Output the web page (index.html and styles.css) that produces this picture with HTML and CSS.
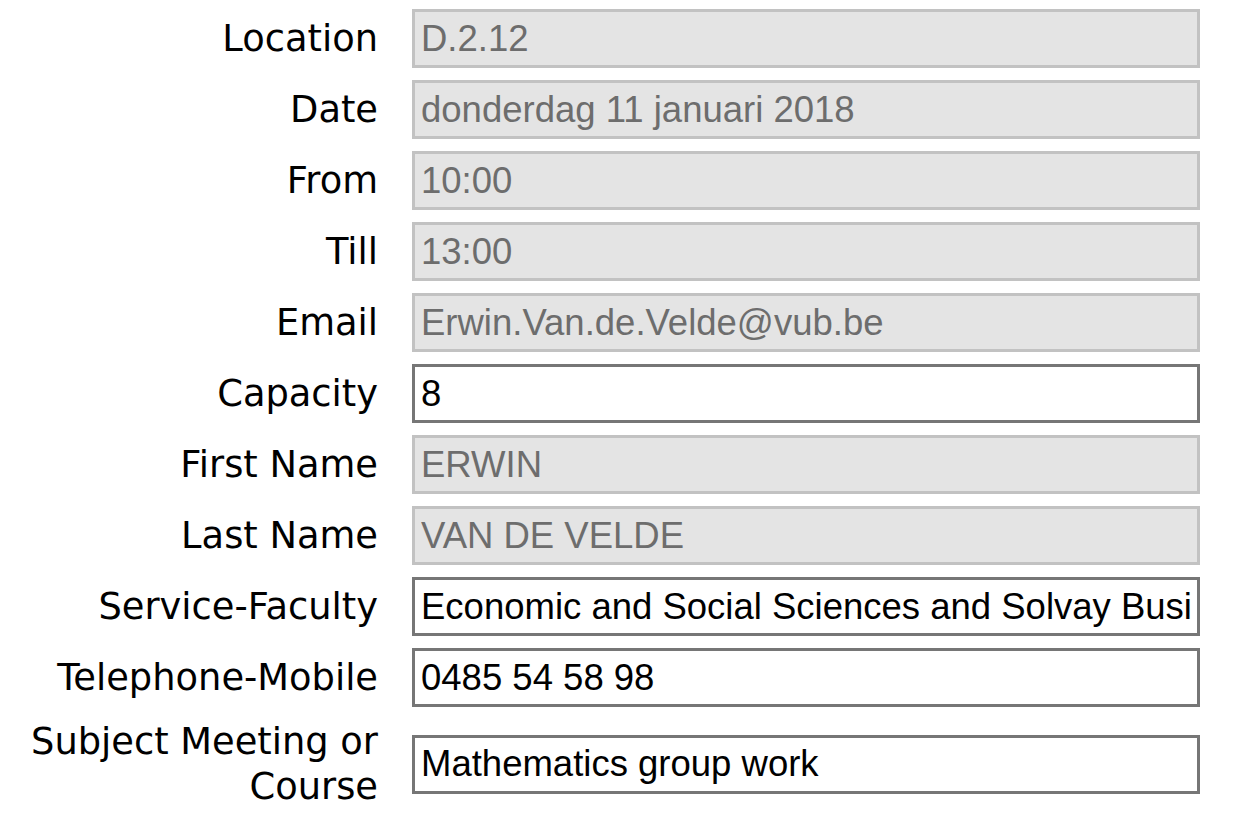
FILE: index.html
```html
<!DOCTYPE html>
<html>
<head>
<meta charset="utf-8">
<link rel="stylesheet" href="styles.css">
</head>
<body>
<form class="form">
  <label class="lbl">Location</label>
  <input class="field ro" type="text" value="D.2.12" disabled>
  <label class="lbl">Date</label>
  <input class="field ro" type="text" value="donderdag 11 januari 2018" disabled>
  <label class="lbl">From</label>
  <input class="field ro" type="text" value="10:00" disabled>
  <label class="lbl">Till</label>
  <input class="field ro" type="text" value="13:00" disabled>
  <label class="lbl">Email</label>
  <input class="field ro" type="text" value="Erwin.Van.de.Velde@vub.be" disabled>
  <label class="lbl">Capacity</label>
  <input class="field" type="text" value="8">
  <label class="lbl">First Name</label>
  <input class="field ro" type="text" value="ERWIN" disabled>
  <label class="lbl">Last Name</label>
  <input class="field ro" type="text" value="VAN DE VELDE" disabled>
  <label class="lbl">Service-Faculty</label>
  <input class="field" type="text" value="Economic and Social Sciences and Solvay Business School">
  <label class="lbl">Telephone-Mobile</label>
  <input class="field" type="text" value="0485 54 58 98">
  <label class="lbl">Subject Meeting or Course</label>
  <input class="field" type="text" value="Mathematics group work">
</form>
</body>
</html>
```
FILE: styles.css
```css
html, body {
  margin: 0;
  padding: 0;
  background: #ffffff;
}
body {
  padding: 9px 0 0 26px;
}
.form {
  display: grid;
  grid-template-columns: 352px 788px;
  column-gap: 34px;
  row-gap: 12px;
  align-items: center;
}
.lbl {
  font-family: "DejaVu Sans", Verdana, sans-serif;
  font-size: 36.8px;
  line-height: 45px;
  color: #000000;
  text-align: right;
}
.field {
  box-sizing: border-box;
  width: 788px;
  height: 59px;
  margin: 0;
  padding: 0 6px;
  border: 3px solid #767676;
  background: #ffffff;
  font-family: "Liberation Sans", Arial, sans-serif;
  font-size: 36.5px;
  color: #000000;
  outline: none;
}
.field.ro {
  border-color: #c2c2c2;
  background: #e4e4e4;
  color: #6d6d6d;
  -webkit-text-fill-color: #6d6d6d;
  opacity: 1;
}
```
